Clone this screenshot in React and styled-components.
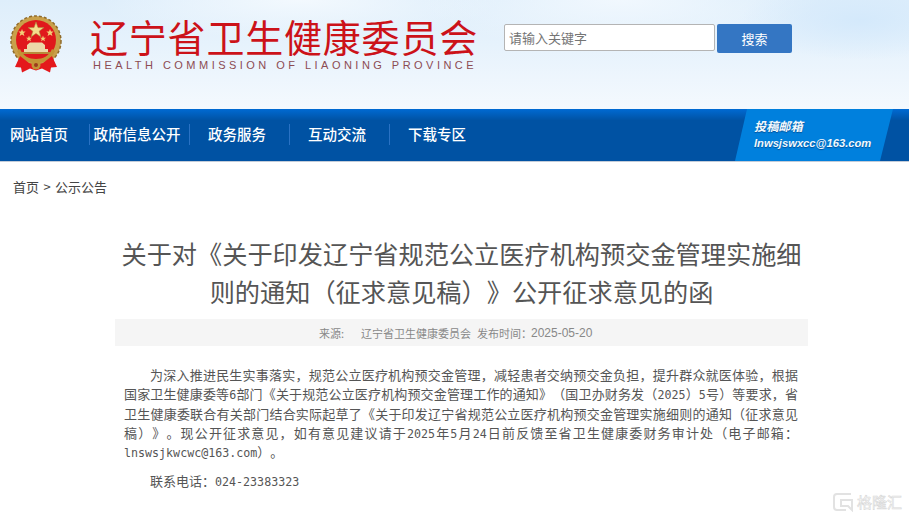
import React from "react";
import styled, { createGlobalStyle } from "styled-components";

const CJK = `"Noto Sans CJK SC", "Liberation Sans", sans-serif`;

const navItems = ["网站首页", "政府信息公开", "政务服务", "互动交流", "下载专区"];

const bodyLines = [
  { first: true, text: "为深入推进民生实事落实，规范公立医疗机构预交金管理，减轻患者交纳预交金负担，提升群众就医体验，根据" },
  { text: "国家卫生健康委等|6|部门《关于规范公立医疗机构预交金管理工作的通知》（国卫办财务发（|2025|）|5|号）等要求，省" },
  { text: "卫生健康委联合有关部门结合实际起草了《关于印发辽宁省规范公立医疗机构预交金管理实施细则的通知（征求意见" },
  { text: "稿）》。现公开征求意见，如有意见建议请于|2025|年|5|月|24|日前反馈至省卫生健康委财务审计处（电子邮箱：" },
  { last: true, text: "|lnswsjkwcwc@163.com|）。" },
];

function Emblem() {
  return (
    <svg width="52" height="60" viewBox="0 0 52 60">
      <circle cx="26" cy="26" r="25" fill="#c9a04a" />
      <circle cx="26" cy="26" r="25" fill="none" stroke="#8f6a2a" strokeWidth="1.5" strokeDasharray="3 2" />
      <circle cx="26" cy="25" r="20" fill="#e0181c" />
      <path d="M26 7l2 5.6h6l-4.8 3.6 1.8 5.8-5-3.5-5 3.5 1.8-5.8-4.8-3.6h6z" fill="#f4dc8c" stroke="#a87f33" strokeWidth=".6" />
      <path d="M12 14l1 2.6h2.6l-2 1.7.8 2.6-2.400-1.500-2.400 1.500.8-2.600-2-1.700h2.600zM40 14l1 2.600h2.600l-2 1.700.8 2.600-2.400-1.500-2.400 1.500.8-2.600-2-1.700h2.600zM19 20.500l.8 2.200h2.200l-1.700 1.400.6 2.200-1.900-1.300-1.900 1.300.6-2.200-1.700-1.400h2.200zM33 20.500l.8 2.200h2.200l-1.700 1.400.6 2.200-1.900-1.300-1.900 1.300.6-2.200-1.700-1.400h2.200z" fill="#f2cf78" />
      <path d="M14 34h24v3H14zM17 30h18v4H17zM20 27.500h12l3 2.500H17z" fill="#ecd9a8" />
      <path d="M12 37h28v2H12z" fill="#b88a3a" />
      <path d="M7 36c3 8 10 12 19 12s16-4 19-12l-3-2c-3 7-9 10-16 10s-13-3-16-10z" fill="#c39436" />
      <path d="M5 52l5-11 9 7 7 2 7-2 9-7 5 11-6 .5-1 5-8-4-6 2-6-2-8 4-1-5z" fill="#e4181c" />
      <circle cx="26" cy="50" r="4.500" fill="#c39436" />
      <circle cx="26" cy="50" r="2" fill="#9c3a1c" />
    </svg>
  );
}

function WatermarkIcon() {
  return (
    <svg width="20" height="20" viewBox="0 0 20 20" fill="none" stroke="#e2e2e2" strokeWidth="2">
      <path d="M18 2H4a3 3 0 0 0-3 3v10a3 3 0 0 0 3 3h9" />
      <path d="M8 8h11v10l-4-4H8z" />
    </svg>
  );
}

function renderBodyText(text) {
  return text.split("|").map((part, i) =>
    i % 2 === 1 ? <Latin key={i}>{part}</Latin> : part
  );
}

export default function App() {
  return (
    <Page>
      <GlobalStyle />
      <Header>
        <Brand>
          <Emblem />
          <BrandText>
            <BrandTitle>辽宁省卫生健康委员会</BrandTitle>
            <BrandSub>HEALTH COMMISSION OF LIAONING PROVINCE</BrandSub>
          </BrandText>
        </Brand>
        <Search>
          <SearchInput placeholder="请输入关键字" />
          <SearchButton>搜索</SearchButton>
        </Search>
      </Header>

      <Nav>
        {navItems.map((item, i) => (
          <NavItem key={item} $first={i === 0} $divider={i > 0}>
            {item}
          </NavItem>
        ))}
        <MailPanel>
          <MailTitle>投稿邮箱</MailTitle>
          <MailAddress>lnwsjswxcc@163.com</MailAddress>
        </MailPanel>
      </Nav>

      <Breadcrumb>首页 &gt; 公示公告</Breadcrumb>

      <Article>
        <Title>
          <TitleLine>关于对《关于印发辽宁省规范公立医疗机构预交金管理实施细</TitleLine>
          <TitleLine>则的通知（征求意见稿）》公开征求意见的函</TitleLine>
        </Title>
        <Meta>
          <MetaLabel>来源:</MetaLabel>
          <span>辽宁省卫生健康委员会</span>
          <MetaTime>发布时间：</MetaTime>
          <MetaDate>2025-05-20</MetaDate>
        </Meta>
        <Body>
          <Paragraph>
            {bodyLines.map((line, i) => (
              <BodyLine key={i} $first={line.first} $last={line.last}>
                {renderBodyText(line.text)}
              </BodyLine>
            ))}
          </Paragraph>
          <Contact>
            联系电话：<Latin>024-23383323</Latin>
          </Contact>
        </Body>
      </Article>

      <Watermark>
        <WatermarkIcon />
        <WatermarkText>格隆汇</WatermarkText>
      </Watermark>
    </Page>
  );
}

const GlobalStyle = createGlobalStyle`
  html, body {
    margin: 0;
    padding: 0;
    background: #fff;
    overflow: hidden;
  }
`;

const Page = styled.div`
  position: relative;
  width: 909px;
  height: 519px;
  overflow: hidden;
  font-family: ${CJK};
  text-spacing-trim: space-all;
  font-feature-settings: "halt" 0, "chws" 0;
`;

const Header = styled.header`
  height: 109px;
  box-sizing: border-box;
  padding: 15px 0 0 10px;
  display: flex;
  align-items: flex-start;
  background:
    radial-gradient(ellipse 120px 40px at 860px 20px, #d4e9fb 0%, rgba(212, 233, 251, 0) 100%),
    radial-gradient(ellipse 200px 50px at 620px 0px, #f1f8fe 0%, rgba(241, 248, 254, 0) 100%),
    radial-gradient(ellipse 200px 40px at 300px 0px, #f3f9fe 0%, rgba(243, 249, 254, 0) 100%),
    linear-gradient(180deg, #deeefb 0%, #e6f2fc 40%, #f4f9fe 100%);
`;

const Brand = styled.div`
  width: 494px;
  display: flex;
  gap: 29px;
`;

const BrandText = styled.div`
  display: flex;
  flex-direction: column;
`;

const BrandTitle = styled.div`
  margin-top: -1px;
  margin-left: -1px;
  font-size: 38px;
  line-height: 44px;
  letter-spacing: 0.8px;
  color: #cc1219;
  white-space: nowrap;
`;

const BrandSub = styled.div`
  margin: 0 0 0 2px;
  font-family: "Liberation Sans", sans-serif;
  font-size: 11px;
  line-height: 14px;
  letter-spacing: 3.47px;
  color: #8c4b52;
  white-space: nowrap;
`;

const Search = styled.div`
  margin-top: 9px;
  display: flex;
  gap: 2px;
  align-items: flex-start;
`;

const SearchInput = styled.input`
  width: 211px;
  height: 27px;
  box-sizing: border-box;
  padding: 0 4px;
  border: 1px solid #b4b4b4;
  border-radius: 2px;
  background: #fff;
  font-family: ${CJK};
  font-size: 13px;
  outline: none;
  &::placeholder {
    color: #757575;
    opacity: 1;
  }
`;

const SearchButton = styled.button`
  width: 75px;
  height: 29px;
  padding: 0;
  border: none;
  border-radius: 2px;
  background: #3476c3;
  color: #fff;
  font-family: ${CJK};
  font-size: 13px;
`;

const Nav = styled.nav`
  height: 53px;
  box-sizing: border-box;
  display: flex;
  align-items: center;
  border-bottom: 1px solid #c3ccd8;
  background: linear-gradient(180deg, #006ad3 0%, #0052a3 22%, #0052a3 100%);
`;

const NavItem = styled.div`
  width: ${(p) => (p.$first ? "79px" : "100px")};
  height: 21px;
  box-sizing: border-box;
  margin: -1px 0 0 ${(p) => (p.$first ? "10px" : "0")};
  padding-right: ${(p) => (p.$first ? "0" : "5px")};
  border-left: ${(p) => (p.$divider ? "1px solid #2a72c4" : "none")};
  text-align: ${(p) => (p.$first ? "left" : "center")};
  color: #fff;
  font-size: 14.5px;
  font-weight: 500;
  line-height: 19px;
  white-space: nowrap;
`;

const MailPanel = styled.div`
  align-self: stretch;
  margin: 0 16px 0 auto;
  width: 158px;
  box-sizing: border-box;
  padding: 10px 0 0 19px;
  clip-path: polygon(12px 0, 100% 0, 145px 100%, 0 100%);
  background: #0080dd;
  color: #f2f8fd;
  font-style: italic;
  font-weight: 700;
  font-family: "Liberation Sans", ${CJK};
  text-shadow: 0 1px 1px rgba(0, 50, 110, 0.6);
`;

const MailTitle = styled.div`
  font-size: 12.2px;
  line-height: 16px;
`;

const MailAddress = styled.div`
  margin-top: 1px;
  font-size: 11.2px;
  line-height: 15px;
  white-space: nowrap;
`;

const Breadcrumb = styled.div`
  padding: 16px 0 0 13px;
  font-size: 13px;
  line-height: 18px;
  word-spacing: 1.5px;
  color: #444;
`;

const Article = styled.main`
  margin: 38px 0 0 115px;
  width: 693px;
`;

const Title = styled.h1`
  margin: 0;
  font-size: 25.2px;
  font-weight: 400;
  line-height: 38px;
  color: #555;
  text-align: center;
`;

const TitleLine = styled.div`
  white-space: nowrap;
`;

const Meta = styled.div`
  margin-top: 9px;
  height: 27px;
  display: flex;
  align-items: center;
  padding-left: 204px;
  background: #f5f5f5;
  font-size: 11px;
  color: #888;
  white-space: nowrap;
`;

const MetaLabel = styled.span`
  width: 42px;
`;

const MetaTime = styled.span`
  margin-left: 6px;
`;

const MetaDate = styled.span`
  font-family: "Liberation Sans", sans-serif;
  font-size: 12px;
  margin-left: -1px;
`;

const Body = styled.div`
  padding: 19px 10px 0 9px;
  color: #555;
  font-size: 13px;
`;

const Paragraph = styled.div``;

const BodyLine = styled.div`
  height: 19.25px;
  line-height: 19.25px;
  padding-left: ${(p) => (p.$first ? "26px" : "0")};
  text-align: justify;
  text-align-last: ${(p) => (p.$last ? "left" : "justify")};
`;

const Latin = styled.span`
  font-family: "DejaVu Sans Mono", monospace;
  font-size: 11.67px;
`;

const Contact = styled.div`
  margin-top: 10px;
  padding-left: 26px;
  line-height: 19px;
`;

const Watermark = styled.div`
  position: absolute;
  right: 7px;
  bottom: 7px;
  display: flex;
  align-items: center;
  gap: 4px;
`;

const WatermarkText = styled.span`
  font-size: 15px;
  line-height: 20px;
  color: #fff;
  -webkit-text-stroke: 0.6px #d8d8d8;
`;
